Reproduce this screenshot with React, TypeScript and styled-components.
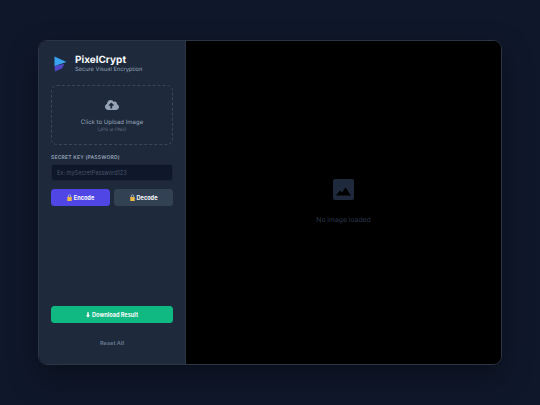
import styled, { createGlobalStyle } from 'styled-components'
import { FaCloudUploadAlt } from 'react-icons/fa'

const GlobalStyle = createGlobalStyle`
  html, body { margin: 0; padding: 0; height: 100%; }
  body {
    background: #0f172a;
    font-family: Inter, "Liberation Sans", sans-serif;
    text-rendering: geometricPrecision;
  }
  #root { height: 100%; }
  * { box-sizing: border-box; }
`

const Page = styled.div`
  width: 540px;
  height: 405px;
  padding: 40px 38px;
`

const Card = styled.div`
  width: 464px;
  height: 325px;
  display: flex;
  border-radius: 9px;
  overflow: hidden;
  background: #000;
  border: 1px solid #2b3545;
  box-shadow: 0 12px 30px rgba(0, 0, 0, 0.35);
`

const Sidebar = styled.aside`
  width: 147px;
  flex: none;
  display: flex;
  flex-direction: column;
  padding: 13px 12px 12px;
  background: #1e293b;
  border-right: 1px solid #2b3545;
`

const Brand = styled.div`
  display: flex;
  align-items: center;
  gap: 8px;
  padding-left: 3px;
  margin-bottom: 11px;
`

const BrandText = styled.div`
  display: flex;
  flex-direction: column;
`

const BrandName = styled.div`
  font-size: 10px;
  line-height: 12px;
  font-weight: 700;
  color: #f8fafc;
`

const BrandSub = styled.div`
  font-size: 5.7px;
  line-height: 8px;
  color: #94a3b8;
`

const Dropzone = styled.div`
  height: 60px;
  display: flex;
  flex-direction: column;
  align-items: center;
  justify-content: center;
  padding-top: 2px;
  border: 1px dashed #3b4657;
  border-radius: 6px;
  margin-bottom: 10px;
`

const UploadIcon = styled(FaCloudUploadAlt)`
  width: 14px;
  height: 14px;
  color: #94a3b8;
  margin-bottom: 7px;
`

const DropTitle = styled.div`
  font-size: 6px;
  line-height: 8px;
  color: #94a3b8;
`

const DropHint = styled.div`
  font-size: 4.5px;
  line-height: 7px;
  color: #64748b;
`

const FieldLabel = styled.div`
  font-size: 5px;
  line-height: 7px;
  font-weight: 600;
  letter-spacing: 0.2px;
  color: #94a3b8;
  margin-bottom: 2px;
`

const KeyInput = styled.input`
  width: 100%;
  height: 17px;
  padding: 0 5px;
  border: 1px solid #1a2436;
  border-radius: 3px;
  background: #0f172a;
  color: #f8fafc;
  font-family: inherit;
  font-size: 5.6px;
  margin-bottom: 8px;
  &::placeholder { color: #475569; opacity: 1; }
`

const ButtonRow = styled.div`
  display: grid;
  grid-template-columns: 1fr 1fr;
  gap: 4px;
`

const ActionButton = styled.button<{ $bg: string }>`
  height: 17px;
  display: flex;
  align-items: center;
  justify-content: center;
  gap: 2px;
  padding: 0;
  border: none;
  border-radius: 3.5px;
  background: ${({ $bg }) => $bg};
  color: #f8fafc;
  font-family: inherit;
  font-size: 5.6px;
  font-weight: 700;
`

const Spacer = styled.div`
  flex: 1;
`

const DownloadButton = styled(ActionButton)`
  width: 100%;
  margin-bottom: 17px;
`

const ResetLink = styled.div`
  text-align: center;
  font-size: 5.6px;
  line-height: 8px;
  font-weight: 700;
  color: #64748b;
  margin-bottom: 4px;
`

const Stage = styled.main`
  flex: 1;
  display: flex;
  flex-direction: column;
  align-items: center;
  justify-content: center;
  padding-bottom: 2px;
  background: #000;
`

const PlaceholderIcon = styled.svg`
  width: 21px;
  height: 21px;
  margin-bottom: 15px;
`

const PlaceholderText = styled.div`
  font-size: 6.8px;
  line-height: 10px;
  color: #293548;
`

function LockGlyph() {
  return (
    <svg width="5" height="7" viewBox="0 0 10 14">
      <path d="M2.5 6V4a2.5 2.5 0 0 1 5 0v2" fill="none" stroke="#b9bec6" strokeWidth="1.6" />
      <rect x="0.5" y="6" width="9" height="8" rx="1" fill="#e9b949" />
    </svg>
  )
}

function DownloadGlyph() {
  return (
    <svg width="4" height="6" viewBox="0 0 10 14">
      <path d="M3 0h4v7h3l-5 7-5-7h3z" fill="#f8fafc" />
    </svg>
  )
}

function Logo() {
  return (
    <svg width="13" height="16" viewBox="0 0 13 16">
      <path d="M0.5 9.5L10.5 8 8 12.5 1 15.5z" fill="#4f46c8" />
      <path d="M0.5 0.5L12.5 6 0.5 10z" fill="#38a3f0" />
    </svg>
  )
}

export default function App() {
  return (
    <>
      <GlobalStyle />
      <Page>
        <Card>
          <Sidebar>
            <Brand>
              <Logo />
              <BrandText>
                <BrandName>PixelCrypt</BrandName>
                <BrandSub>Secure Visual Encryption</BrandSub>
              </BrandText>
            </Brand>
            <Dropzone>
              <UploadIcon />
              <DropTitle>Click to Upload Image</DropTitle>
              <DropHint>(JPG or PNG)</DropHint>
            </Dropzone>
            <FieldLabel>SECRET KEY (PASSWORD)</FieldLabel>
            <KeyInput placeholder="Ex: mySecretPassword123" />
            <ButtonRow>
              <ActionButton $bg="#4f46e5"><LockGlyph />Encode</ActionButton>
              <ActionButton $bg="#334155"><LockGlyph />Decode</ActionButton>
            </ButtonRow>
            <Spacer />
            <DownloadButton $bg="#10b981"><DownloadGlyph />Download Result</DownloadButton>
            <ResetLink>Reset All</ResetLink>
          </Sidebar>
          <Stage>
            <PlaceholderIcon viewBox="0 0 21 21">
              <rect width="21" height="21" rx="2" fill="#1e293b" />
              <path d="M3 16.5l4-5 2 2 3.5-5 5.5 8z" fill="#000" />
            </PlaceholderIcon>
            <PlaceholderText>No image loaded</PlaceholderText>
          </Stage>
        </Card>
      </Page>
    </>
  )
}
